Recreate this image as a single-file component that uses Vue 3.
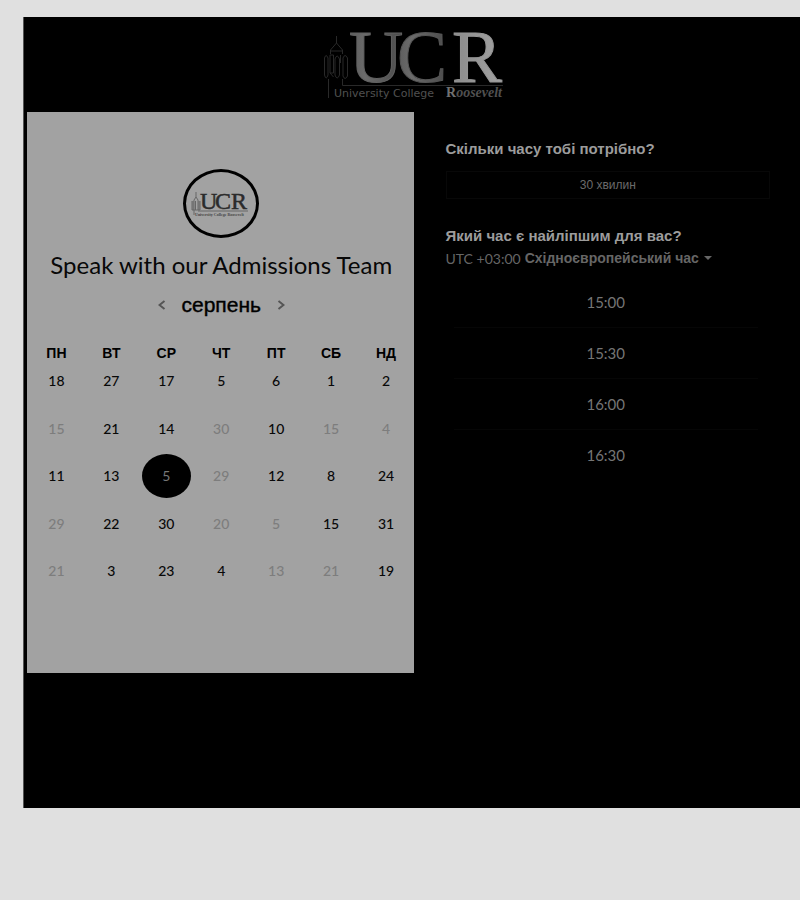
<script setup>
import { ref } from 'vue'

const weekdays = ['ПН', 'ВТ', 'СР', 'ЧТ', 'ПТ', 'СБ', 'НД']

// Negative numbers are days that cannot be booked.
const weeks = [
  [18, 27, 17, 5, 6, 1, 2],
  [-15, 21, 14, -30, 10, -15, -4],
  [11, 13, 5, -29, 12, 8, 24],
  [-29, 22, 30, -20, -5, 15, 31],
  [-21, 3, 23, 4, -13, -21, 19],
]
const selected = ref('2-2')
const times = ['15:00', '15:30', '16:00', '16:30']
</script>

<template>
  <div class="page">
    <main class="booking">
      <header class="brand">
        <svg class="brand-logo" viewBox="0 0 184 72" role="img" aria-label="University College Roosevelt">
          <defs>
            <linearGradient id="metal" x1="0" x2="1" y1="0" y2="0">
              <stop offset="0" stop-color="#5c5c5c" />
              <stop offset="0.3" stop-color="#6b6b6b" />
              <stop offset="1" stop-color="#4a4a4a" />
            </linearGradient>
            <linearGradient id="silver" x1="0" x2="1" y1="0" y2="0">
              <stop offset="0" stop-color="#8a8a8a" />
              <stop offset="1" stop-color="#a2a2a2" />
            </linearGradient>
          </defs>
          <g class="tower">
            <path d="M14.500 7V14L8.500 21V25M14.500 14L20.500 21V25M8.500 22H20.500" />
            <path d="M2.500 29Q4 24 6 29V46Q4 52 2.500 46ZM8 26H11.500V44H8ZM13 30Q15 24 17.500 30V46Q15 52 13 46ZM21 29Q23 24 25.500 29V47Q23 52 21 47ZM18.500 26V34M8 44L11.500 48" />
            <path d="M6.500 50V69M20.500 50V56.500H181" />
          </g>
          <text class="ucr" x="27" y="53" fill="url(#metal)" stroke="#626262">U</text>
          <text class="ucr" x="75" y="53" fill="url(#metal)" stroke="#565656">C</text>
          <text class="ucr" x="130" y="53" fill="url(#silver)" stroke="#959595">R</text>
          <text class="tag" x="12" y="68">University College</text>
          <text class="roosevelt" x="124" y="68">R<tspan class="slant">oosevelt</tspan></text>
        </svg>
      </header>

      <div class="columns">
        <section class="calendar" aria-label="Календар">
          <div class="avatar">
            <svg viewBox="0 0 60 28" aria-hidden="true">
              <path class="mini-tower" d="M5 2V7L3 10V20M5 7L7 10V20M1 11V20H9V11M2 11V20M8 11V20M4.500 11V20M3 20V25M7 21H57" />
              <text class="mini-ucr" x="9" y="19">U</text>
              <text class="mini-ucr" x="24" y="19">C</text>
              <text class="mini-ucr" x="40" y="19">R</text>
              <text class="mini-tag" x="4" y="26">University College Roosevelt</text>
            </svg>
          </div>
          <h1>Speak with our Admissions Team</h1>
          <div class="month">
            <button type="button" class="arrow" aria-label="Попередній місяць">
              <svg viewBox="0 0 8 10"><path d="M6.500 1L1.500 5L6.500 9" /></svg>
            </button>
            <h2>серпень</h2>
            <button type="button" class="arrow" aria-label="Наступний місяць">
              <svg viewBox="0 0 8 10"><path d="M1.500 1L6.500 5L1.500 9" /></svg>
            </button>
          </div>
          <table>
            <thead>
              <tr>
                <th v-for="d in weekdays" :key="d" scope="col">{{ d }}</th>
              </tr>
            </thead>
            <tbody>
              <tr v-for="(week, w) in weeks" :key="w">
                <td v-for="(day, d) in week" :key="d">
                  <button
                    type="button"
                    class="day"
                    :class="{ chosen: selected === w + '-' + d }"
                    :disabled="day < 0"
                    @click="selected = w + '-' + d"
                  >{{ Math.abs(day) }}</button>
                </td>
              </tr>
            </tbody>
          </table>
        </section>

        <section class="options">
          <h3>Скільки часу тобі потрібно?</h3>
          <button type="button" class="duration">30 хвилин</button>
          <h3>Який час є найліпшим для вас?</h3>
          <div class="zone">
            <label for="zone">UTC +03:00</label>
            <select id="zone">
              <option>Східноєвропейський час</option>
            </select>
            <svg viewBox="0 0 8 4" aria-hidden="true"><path d="M0 0H8L4 4Z" /></svg>
          </div>
          <ul class="times">
            <li v-for="t in times" :key="t">
              <button type="button">{{ t }}</button>
            </li>
          </ul>
        </section>
      </div>
    </main>
  </div>
</template>

<style>
body {
  background: #e0e0e0;
}
</style>

<style scoped>
.page {
  padding: 17px 0 0 23px;
  font-family: Lato, "Liberation Sans", sans-serif;
}
.booking {
  box-sizing: border-box;
  padding: 0 0 135px 3px;
  border-left: 1px solid #555;
  background: #000;
  margin-bottom: 80px;
}
h1, h2, h3, ul {
  margin: 0;
  padding: 0;
  font-weight: 400;
}
button, select {
  padding: 0;
  border: 0;
  background: none;
  color: inherit;
  font: inherit;
  cursor: pointer;
}
.brand {
  display: flex;
  justify-content: center;
  box-sizing: border-box;
  height: 95px;
  padding: 12px 0 0;
}
.brand-logo {
  width: 184px;
  height: 72px;
  overflow: visible;
}
.tower {
  fill: none;
  stroke: #292929;
  stroke-width: 1;
}
.ucr {
  font: 75px "Liberation Serif", serif;
  stroke-width: 1;
}
.tag {
  fill: #505050;
  font: 11px "DejaVu Sans", sans-serif;
}
.roosevelt {
  fill: #707070;
  font: bold 14px "Liberation Serif", serif;
}
.slant {
  font-style: italic;
  fill: #505050;
}
.columns {
  display: grid;
  grid-template-columns: 1fr 1fr;
}
.calendar {
  display: flex;
  flex-direction: column;
  align-items: center;
  box-sizing: border-box;
  min-height: 561px;
  padding: 57px 0 0 2px;
  background: #a2a2a2;
  color: #080808;
}
.avatar {
  display: grid;
  place-items: center;
  box-sizing: border-box;
  width: 76px;
  height: 69px;
  border: 3px solid #000;
  border-radius: 50%;
}
.avatar svg {
  width: 60px;
  height: 28px;
  overflow: visible;
}
.mini-tower {
  fill: none;
  stroke: #666;
  stroke-width: 1;
}
.mini-ucr {
  fill: #2b2b2b;
  stroke: #2b2b2b;
  stroke-width: 0.5;
  font: 24px "Liberation Serif", serif;
}
.mini-tag {
  fill: #444;
  font: bold 4px "Liberation Serif", serif;
}
h1 {
  margin-top: 13px;
  font-size: 24px;
  line-height: 28px;
  white-space: nowrap;
}
.month {
  display: flex;
  align-items: center;
  gap: 16px;
  margin-top: 14px;
}
h2 {
  font: 21px/24px "Liberation Sans", sans-serif;
  color: #000;
  -webkit-text-stroke: 0.4px #000;
}
.arrow {
  display: grid;
  place-items: center;
  width: 8px;
  height: 24px;
}
.arrow svg {
  width: 8px;
  height: 10px;
  fill: none;
  stroke: #555;
  stroke-width: 2;
}
table {
  width: 100%;
  margin-top: 32px;
  border-collapse: collapse;
  table-layout: fixed;
}
th {
  padding: 0;
  color: #000;
  font: bold 14px/8px "Liberation Sans", sans-serif;
}
tbody tr {
  height: 47px;
}
tbody tr:nth-child(even) {
  height: 48px;
}
td {
  padding: 0;
  text-align: center;
}
.day {
  display: grid;
  place-items: center;
  width: 49px;
  height: 44px;
  margin: 0 auto;
  border-radius: 50%;
  font-size: 14px;
  font-weight: 500;
}
.day:disabled {
  color: #7d7d7d;
  cursor: default;
}
.chosen {
  background: #000;
  color: #777;
  font-weight: 400;
}
.options {
  padding: 27px 30px 0 32px;
}
h3 {
  color: #9c9c9c;
  font: bold 15px/20px "Liberation Sans", sans-serif;
}
.duration {
  display: block;
  width: 100%;
  height: 28px;
  margin: 12px 0 27px;
  border: 1px solid #080808;
  color: #6b6b6b;
  font: 12px "Liberation Sans", sans-serif;
}
.zone {
  display: flex;
  align-items: center;
  gap: 4px;
  height: 24px;
  color: #666;
  font-size: 14px;
}
.zone select {
  appearance: none;
  font: bold 14px/20px "Liberation Sans", sans-serif;
}
.zone svg {
  width: 8px;
  height: 4px;
  fill: #666;
}
.times {
  margin: 7px 12px 0 8px;
  list-style: none;
}
.times li {
  border-bottom: 1px solid #060606;
}
.times li:last-child {
  border: 0;
}
.times button {
  width: 100%;
  height: 50px;
  color: #757575;
  font-size: 15px;
}
</style>
